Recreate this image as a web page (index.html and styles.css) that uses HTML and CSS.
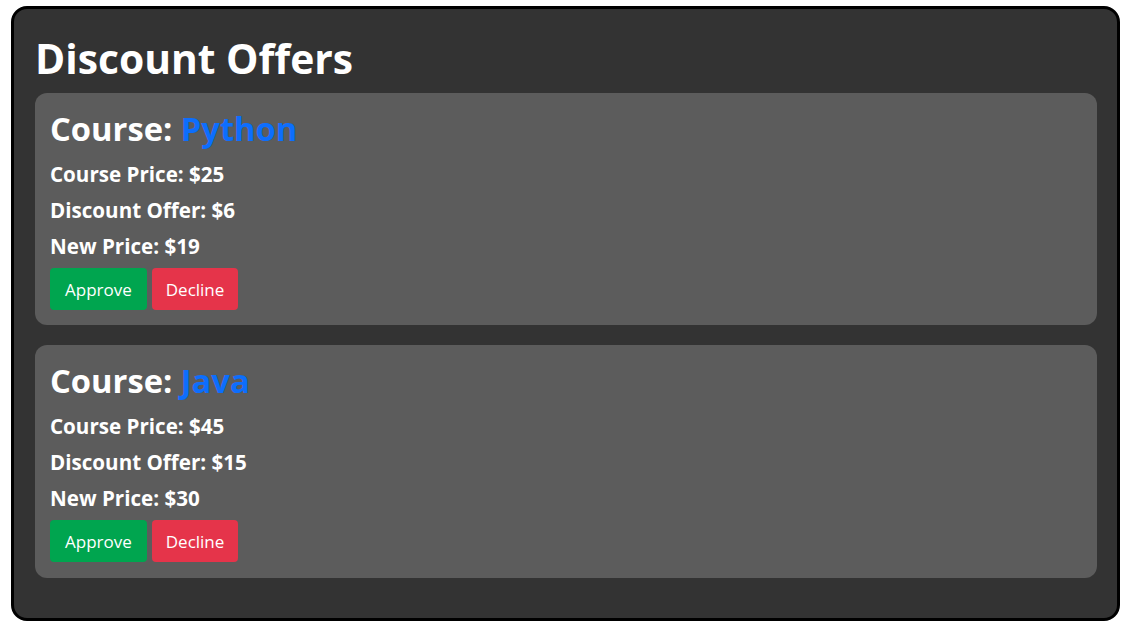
FILE: index.html
```html
<!DOCTYPE html>
<html lang="en">
<head>
<meta charset="utf-8">
<title>Discount Offers</title>
<link rel="stylesheet" href="styles.css">
</head>
<body>
<div class="panel">
  <h1 class="title">Discount Offers</h1>
  <div class="offer">
    <h2 class="course">Course: <span class="name">Python</span></h2>
    <p class="line">Course Price: $25</p>
    <p class="line">Discount Offer: $6</p>
    <p class="line">New Price: $19</p>
    <div class="actions">
      <button class="btn approve">Approve</button>
      <button class="btn decline">Decline</button>
    </div>
  </div>
  <div class="offer">
    <h2 class="course">Course: <span class="name">Java</span></h2>
    <p class="line">Course Price: $45</p>
    <p class="line">Discount Offer: $15</p>
    <p class="line">New Price: $30</p>
    <div class="actions">
      <button class="btn approve">Approve</button>
      <button class="btn decline">Decline</button>
    </div>
  </div>
</div>
</body>
</html>
```
FILE: styles.css
```css
html, body {
  background: #ffffff;
}
body {
  margin: 6px 11px 13px 11px;
  font-family: "Open Sans", "Noto Sans", sans-serif;
  color: #ffffff;
}
.panel {
  background: #333333;
  border: 3px solid #000000;
  border-radius: 16px;
  padding: 20px 20px 23px 21px;
  height: 615px;
  box-sizing: border-box;
  display: flex;
  flex-direction: column;
}
.title {
  margin: 0 0 6px 0;
  font-size: 40.8px;
  font-weight: 700;
  line-height: 58px;
}
.offer {
  background: #5c5c5c;
  border-radius: 12px;
  padding: 15px 15px 15px 15px;
  margin-bottom: 20px;
  display: flex;
  flex-direction: column;
}
.offer + .offer {
  padding-bottom: 16px;
}
.course {
  margin: 0 0 6px 0;
  font-size: 32.7px;
  font-weight: 700;
  line-height: 42px;
}
.name {
  color: #0d6efd;
}
.line {
  margin: 0;
  font-size: 20.6px;
  font-weight: 700;
  line-height: 36px;
}
.actions {
  display: flex;
  gap: 5px;
  margin-top: 4px;
}
.btn {
  font-family: "Open Sans", "Noto Sans", sans-serif;
  font-size: 17px;
  color: #ffffff;
  border: none;
  border-radius: 4px;
  height: 42px;
  padding: 0 15px;
  cursor: pointer;
}
.decline {
  padding: 0 14px;
}
.approve {
  background: #00a54f;
}
.decline {
  background: #e5344a;
}
```
